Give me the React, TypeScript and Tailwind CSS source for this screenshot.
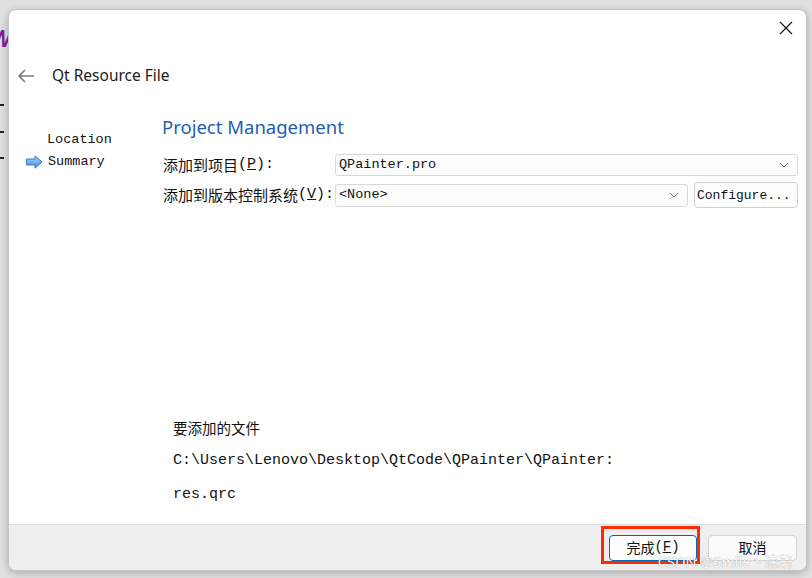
import React from 'react'

const ui = { fontFamily: '"Noto Sans", "Noto Sans CJK SC", sans-serif' }
const cjk = { fontFamily: '"Noto Sans CJK SC", "Noto Sans", sans-serif' }
const mono = { fontFamily: '"Liberation Mono", "Noto Sans CJK SC", monospace' }

function Chevron() {
  return (
    <svg width="10" height="6" viewBox="0 0 10 6" className="shrink-0">
      <path d="M1 1 L5 5 L9 1" fill="none" stroke="#6b6b6b" strokeWidth="1" />
    </svg>
  )
}

interface ComboProps {
  value: string;
  className?: string;
}

const Combo: React.FC<ComboProps> = ({ value, className }) => {
  return (
    <div className={'flex items-center justify-between border border-[#d9d9d9] bg-[#fdfdfd] rounded-[3px] pl-[3px] pr-[8px] ' + (className ?? '')}>
      <span className="text-[13.5px] text-[#111] pt-[1px]" style={mono}>{value}</span>
      <Chevron />
    </div>
  )
}

// label with the SimSun-like half width "(X)：" tail
function FieldLabel({ text, mnemonic }: { text: string; mnemonic: string }) {
  return (
    <div className="w-[173px] pl-[1px] shrink-0 whitespace-nowrap flex items-center text-[#111]">
      <span className="text-[15px]" style={cjk}>{text}</span>
      <span className="text-[15px]" style={mono}>(<span className="underline">{mnemonic}</span>):</span>
    </div>
  )
}

export default function App() {
  return (
    <div className="w-[812px] h-[578px] bg-[#e1e1e1] flex overflow-hidden">
      {/* background window peeking on the left */}
      <div className="w-[8px] shrink-0 relative overflow-hidden">
        <span className="absolute left-[-10px] top-[20px] text-[24px] font-semibold italic text-[#7a1a9a]" style={ui}>W</span>
        <div className="absolute left-0 top-[104px] w-[4px] h-[2px] bg-[#222]" />
        <div className="absolute left-0 top-[131px] w-[4px] h-[2px] bg-[#222]" />
        <div className="absolute left-0 top-[157px] w-[4px] h-[2px] bg-[#222]" />
      </div>

      <div className="mt-[9px] w-[799px] h-[562px] bg-white rounded-[8px] border border-[#c4c4c4] shadow-[0_2px_8px_rgba(0,0,0,0.25)] flex flex-col overflow-hidden">
        {/* close row */}
        <div className="h-[35px] flex items-center justify-end pr-[13px] shrink-0">
          <svg width="14" height="14" viewBox="0 0 14 14">
            <path d="M1 1 L13 13 M13 1 L1 13" stroke="#1a1a1a" strokeWidth="1.2" fill="none" />
          </svg>
        </div>

        {/* title */}
        <div className="h-[60px] flex items-center shrink-0 pt-[2px]">
          <svg width="18" height="14" viewBox="0 0 18 14" className="ml-[8px]">
            <path d="M17 7 H2 M8 1 L2 7 L8 13" stroke="#7a7a7a" strokeWidth="1.6" fill="none" />
          </svg>
          <span className="ml-[17px] text-[15.5px] text-[#1b1b1b]" style={ui}>Qt Resource File</span>
        </div>

        {/* body */}
        <div className="flex-1 flex min-h-0">
          <div className="w-[153px] shrink-0 pt-[24px] flex flex-col">
            <div className="h-[22px] flex items-center pl-[38px]">
              <span className="text-[13.5px] text-[#111]" style={mono}>Location</span>
            </div>
            <div className="h-[22px] flex items-center pl-[17px]">
              <svg width="17" height="14" viewBox="0 0 17 14" className="mr-[5px]">
                <defs>
                  <linearGradient id="ag" x1="0" y1="0" x2="0" y2="1">
                    <stop offset="0" stopColor="#a9d1f7" />
                    <stop offset="1" stopColor="#3f8fe0" />
                  </linearGradient>
                </defs>
                <path d="M0.5 4 H9 V0.8 L16 7 L9 13.2 V10 H0.5 Z" fill="url(#ag)" stroke="#3b78c4" strokeWidth="1" />
              </svg>
              <span className="text-[13.5px] text-[#111]" style={mono}>Summary</span>
            </div>
          </div>

          <div className="flex-1 flex flex-col pr-[8px]">
            <div className="mt-[9px] h-[26px] flex items-center">
              <span className="text-[18.5px] text-[#1f5cb8]" style={ui}>Project Management</span>
            </div>

            <div className="mt-[14px] h-[22px] flex items-center">
              <FieldLabel text="添加到项目" mnemonic="P" />
              <Combo value="QPainter.pro" className="flex-1 h-[22px]" />
            </div>

            <div className="mt-[6px] h-[26px] flex items-center">
              <FieldLabel text="添加到版本控制系统" mnemonic="V" />
              <Combo value="<None>" className="w-[353px] h-[23px]" />
              <button className="ml-[6px] flex-1 h-[26px] border border-[#d0d0d0] bg-[#fdfdfd] rounded-[4px] text-[13px] text-[#111] text-left pl-[2px] pt-[1px]" style={mono}>
                Configure...
              </button>
            </div>

            <div className="mt-auto pl-[11px] pb-[18px] flex flex-col">
              <div className="h-[22px] flex items-center text-[14.5px] text-[#111]" style={cjk}>要添加的文件</div>
              <div className="mt-[11px] h-[22px] flex items-center text-[15px] text-[#111]" style={mono}>
                C:\Users\Lenovo\Desktop\QtCode\QPainter\QPainter:
              </div>
              <div className="mt-[12px] h-[22px] flex items-center text-[15px] text-[#111]" style={mono}>res.qrc</div>
            </div>
          </div>
        </div>

        {/* footer */}
        <div className="h-[46px] shrink-0 bg-[#efefef] border-t border-[#dcdcdc] flex items-center justify-end pr-[9px] gap-[11px] relative">
          <div className="relative">
            <button className="w-[88px] h-[26px] rounded-[4px] border border-[#0067c0] bg-[#fdfdfd] text-[14px] text-[#111] flex items-center justify-center" >
              <span style={cjk}>完成</span>
              <span style={mono} className="text-[14px]">(<span className="underline">F</span>)</span>
            </button>
            <div className="absolute left-[-8px] top-[-9px] right-[-3px] bottom-[-3px] border-[3px] border-[#ff2a00]" />
          </div>
          <button className="w-[89px] h-[26px] rounded-[4px] border border-[#d2d2d2] bg-[#fbfbfb] text-[14px] text-[#111]" style={cjk}>
            取消
          </button>
          <span
            className="absolute right-[12px] bottom-[0px] text-[14.5px] leading-[17px] text-white [text-shadow:0_0_1px_rgba(0,0,0,0.5)]"
            style={ui}
          >
            CSDN @Smile丶凉轩
          </span>
        </div>
      </div>
      <div className="flex-1" />
    </div>
  )
}
